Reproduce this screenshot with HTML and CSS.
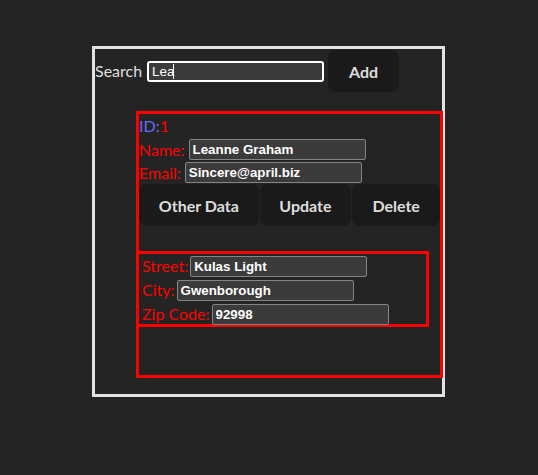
FILE: index.html
```html
<!DOCTYPE html>
<html lang="en">
<head>
<meta charset="utf-8">
<title>Users</title>
<link rel="stylesheet" href="styles.css">
</head>
<body>
<div class="app">
  <div class="search-row">
    <label class="search-label" for="search">Search</label>
    <span class="search-wrap">
      <input id="search" class="search-input" type="text" value="Lea">
      <span class="caret"></span>
    </span>
    <button class="btn btn-add">Add</button>
  </div>

  <div class="user-card">
    <div class="id-row"><span class="id-label">ID:</span><span class="id-value">1</span></div>
    <div class="field"><span class="field-label">Name:</span><input class="field-input" type="text" value="Leanne Graham"></div>
    <div class="field"><span class="field-label">Email:</span><input class="field-input" type="text" value="Sincere@april.biz"></div>
    <div class="actions">
      <button class="btn btn-other">Other Data</button>
      <button class="btn btn-update">Update</button>
      <button class="btn btn-delete">Delete</button>
    </div>
    <div class="address">
      <div class="field field-addr"><span class="field-label">Street:</span><input class="field-input" type="text" value="Kulas Light"></div>
      <div class="field field-addr"><span class="field-label">City:</span><input class="field-input" type="text" value="Gwenborough"></div>
      <div class="field field-addr"><span class="field-label">Zip Code:</span><input class="field-input" type="text" value="92998"></div>
    </div>
  </div>
</div>
</body>
</html>
```

FILE: styles.css
```css
* {
  box-sizing: border-box;
}

html, body {
  margin: 0;
  background: #242424;
}

body {
  font-family: "Lato", "Open Sans", sans-serif;
  font-size: 16px;
  line-height: 24px;
  color: rgba(255, 255, 255, 0.87);
  color-scheme: dark;
  padding: 46px 0 0 92px;
}

.app {
  width: 353px;
  border: 3px solid #e3e3e3;
  padding-bottom: 16px;
}

.search-row {
  display: flex;
  align-items: center;
  padding-top: 1px;
  margin-bottom: 19px;
}

.search-label {
  margin-right: 5px;
}

.search-wrap {
  position: relative;
  display: inline-flex;
}

.search-input {
  width: 177px;
  height: 21px;
  margin-top: 1px;
  padding: 0 3px;
  border: 2px solid #ffffff;
  border-radius: 3px;
  background: #3b3b3b;
  color: #ffffff;
  font-family: "Liberation Sans", Arial, sans-serif;
  font-size: 13.33px;
  outline: none;
}

.caret {
  position: absolute;
  left: 26px;
  top: 4px;
  width: 1px;
  height: 15px;
  background: #ffffff;
}

.btn {
  height: 42px;
  padding: 0;
  border: 1px solid transparent;
  border-radius: 8px;
  background: #1a1a1a;
  color: rgba(255, 255, 255, 0.87);
  font-family: "Lato", "Open Sans", sans-serif;
  font-size: 16px;
  font-weight: 700;
  cursor: pointer;
}

.btn-add {
  width: 71px;
  margin-left: 4px;
}

.user-card {
  width: 307px;
  margin-left: 41px;
  border: 3px solid #ff0000;
  padding-bottom: 48px;
}

.id-row {
  height: 24px;
}

.id-label {
  color: #646cff;
}

.id-value {
  color: #ff0000;
}

.field {
  display: flex;
  align-items: center;
  height: 23px;
  color: #ff0000;
}

.field-label {
  margin-right: 4px;
}

.field-input {
  width: 177px;
  height: 21px;
  padding: 0 3px;
  border: 1px solid #858585;
  border-radius: 2px;
  background: #3b3b3b;
  color: #ffffff;
  font-family: "Liberation Sans", Arial, sans-serif;
  font-size: 13.33px;
  font-weight: 700;
}

.actions {
  display: flex;
  gap: 1px;
  margin-bottom: 25px;
}

.btn-other {
  width: 120px;
}

.btn-update {
  width: 92px;
}

.btn-delete {
  width: 88px;
}

.address {
  width: 293px;
  height: 76px;
  margin-left: -3px;
  padding-left: 3px;
  border: 3px solid #ff0000;
}

.field-addr {
  height: 24px;
}

.field-addr .field-label {
  margin-right: 2px;
}
```
